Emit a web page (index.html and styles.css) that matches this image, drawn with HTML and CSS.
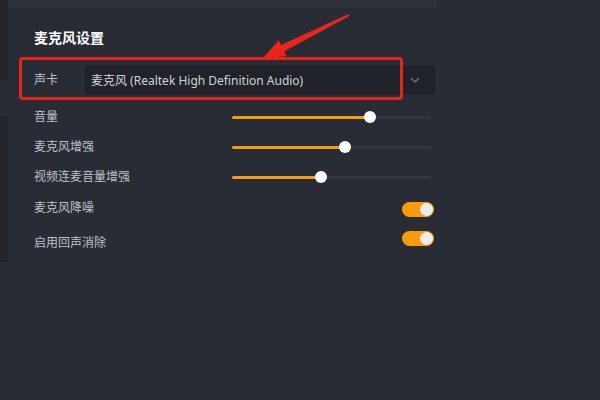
FILE: index.html
```html
<!DOCTYPE html>
<html lang="zh-CN">
<head>
    <meta charset="UTF-8">
    <meta name="viewport" content="width=device-width, initial-scale=1.0">
    <title>麦克风设置</title>
    <link rel="stylesheet" href="styles.css">
</head>
<body>
    <div class="page">
        <div class="side">
            <div class="side-block side-top"></div>
            <div class="side-block side-bottom"></div>
        </div>

        <div class="content">
            <div class="top-band"></div>

            <div class="panel">
                <h2 class="title">麦克风设置</h2>

                <div class="row-select">
                    <span class="label label-card">声卡</span>
                    <div class="select">
                        <span class="select-text">麦克风 (Realtek High Definition Audio)</span>
                        <svg class="chevron" width="10" height="6" viewBox="0 0 10 6">
                            <path d="M1 1 L5 5 L9 1" fill="none" stroke="#7d828b" stroke-width="1.2"/>
                        </svg>
                    </div>
                </div>

                <div class="row">
                    <span class="label">音量</span>
                    <div class="slider">
                        <div class="slider-fill" style="width: 138px"></div>
                        <div class="slider-thumb" style="left: 138px"></div>
                    </div>
                </div>
                <div class="row">
                    <span class="label">麦克风增强</span>
                    <div class="slider">
                        <div class="slider-fill" style="width: 113px"></div>
                        <div class="slider-thumb" style="left: 113px"></div>
                    </div>
                </div>
                <div class="row">
                    <span class="label">视频连麦音量增强</span>
                    <div class="slider">
                        <div class="slider-fill" style="width: 89px"></div>
                        <div class="slider-thumb" style="left: 89px"></div>
                    </div>
                </div>
                <div class="row row-noise">
                    <span class="label">麦克风降噪</span>
                    <div class="toggle toggle-low"><div class="toggle-knob"></div></div>
                </div>
                <div class="row row-echo">
                    <span class="label">启用回声消除</span>
                    <div class="toggle toggle-high"><div class="toggle-knob"></div></div>
                </div>
            </div>
        </div>
    </div>

    <!-- annotation drawn over the screenshot -->
    <div class="mark-box"></div>
    <svg class="mark-arrow" width="600" height="400" viewBox="0 0 600 400">
        <polygon points="263,58 278.7,40.2 281.1,44.9 348.6,14.1 349.4,15.9 284.3,51.3 286.7,56.2" fill="#ec2419"/>
    </svg>
</body>
</html>
```

FILE: styles.css
```css
body {
    margin: 0;
    width: 600px;
    height: 400px;
    background: #282c34;
    font-family: "Noto Sans", "Noto Sans CJK SC", sans-serif;
    color: #bfc2c7;
    overflow: hidden;
    position: relative;
}

.page {
    display: flex;
}

.side {
    width: 8px;
    display: flex;
    flex-direction: column;
}

.side-block {
    background: #21252b;
}

.side-top {
    height: 80px;
}

.side-bottom {
    margin-top: 36px;
    height: 146px;
}

.content {
    width: 429px;
}

.top-band {
    height: 8px;
    background: #2d313a;
}

.panel {
    padding-left: 26px;
    width: 401px;
}

.title {
    margin: 20px 0 0;
    height: 20px;
    line-height: 20px;
    font-size: 14px;
    font-weight: bold;
    color: #ffffff;
}

.row-select {
    margin-top: 17px;
    height: 30px;
    display: flex;
    align-items: center;
}

.label {
    flex: 1;
    font-size: 12px;
    line-height: 16px;
    color: #bfc2c7;
}

.label-card {
    flex: none;
    width: 51px;
}

.select {
    width: 350px;
    height: 30px;
    background: #1f2228;
    display: flex;
    align-items: center;
    justify-content: space-between;
    padding: 0 15px 0 6px;
    box-sizing: border-box;
}

.select-text {
    font-size: 12px;
    color: #d2d4d8;
}

.chevron {
    display: block;
}

.row {
    height: 30px;
    display: flex;
    align-items: center;
}

.row-select + .row {
    margin-top: 7px;
}

.row-noise {
    margin-top: 1px;
}

.row-echo {
    margin-top: 5px;
}

.slider {
    position: relative;
    width: 200px;
    height: 3px;
    margin-right: 3px;
    border-radius: 2px;
    background: #323640;
}

.slider-fill {
    height: 3px;
    border-radius: 2px;
    background: #f89c0e;
}

.slider-thumb {
    position: absolute;
    top: -5px;
    width: 12px;
    height: 12px;
    margin-left: -6px;
    border-radius: 50%;
    background: #ffffff;
}

.toggle {
    width: 32px;
    height: 15px;
    margin-right: 1px;
    border-radius: 8px;
    background: #f89c0e;
    display: flex;
    align-items: center;
    justify-content: flex-end;
    padding-right: 1px;
    box-sizing: border-box;
}

.toggle-low {
    margin-top: 3px;
}

.toggle-high {
    margin-bottom: 10px;
}

.toggle-knob {
    width: 13px;
    height: 13px;
    border-radius: 50%;
    background: #ececec;
}

.mark-box {
    position: absolute;
    left: 19px;
    top: 57px;
    width: 384px;
    height: 43px;
    box-sizing: border-box;
    border: 3px solid #e8231a;
    border-radius: 4px;
}

.mark-arrow {
    position: absolute;
    left: 0;
    top: 0;
}
```
